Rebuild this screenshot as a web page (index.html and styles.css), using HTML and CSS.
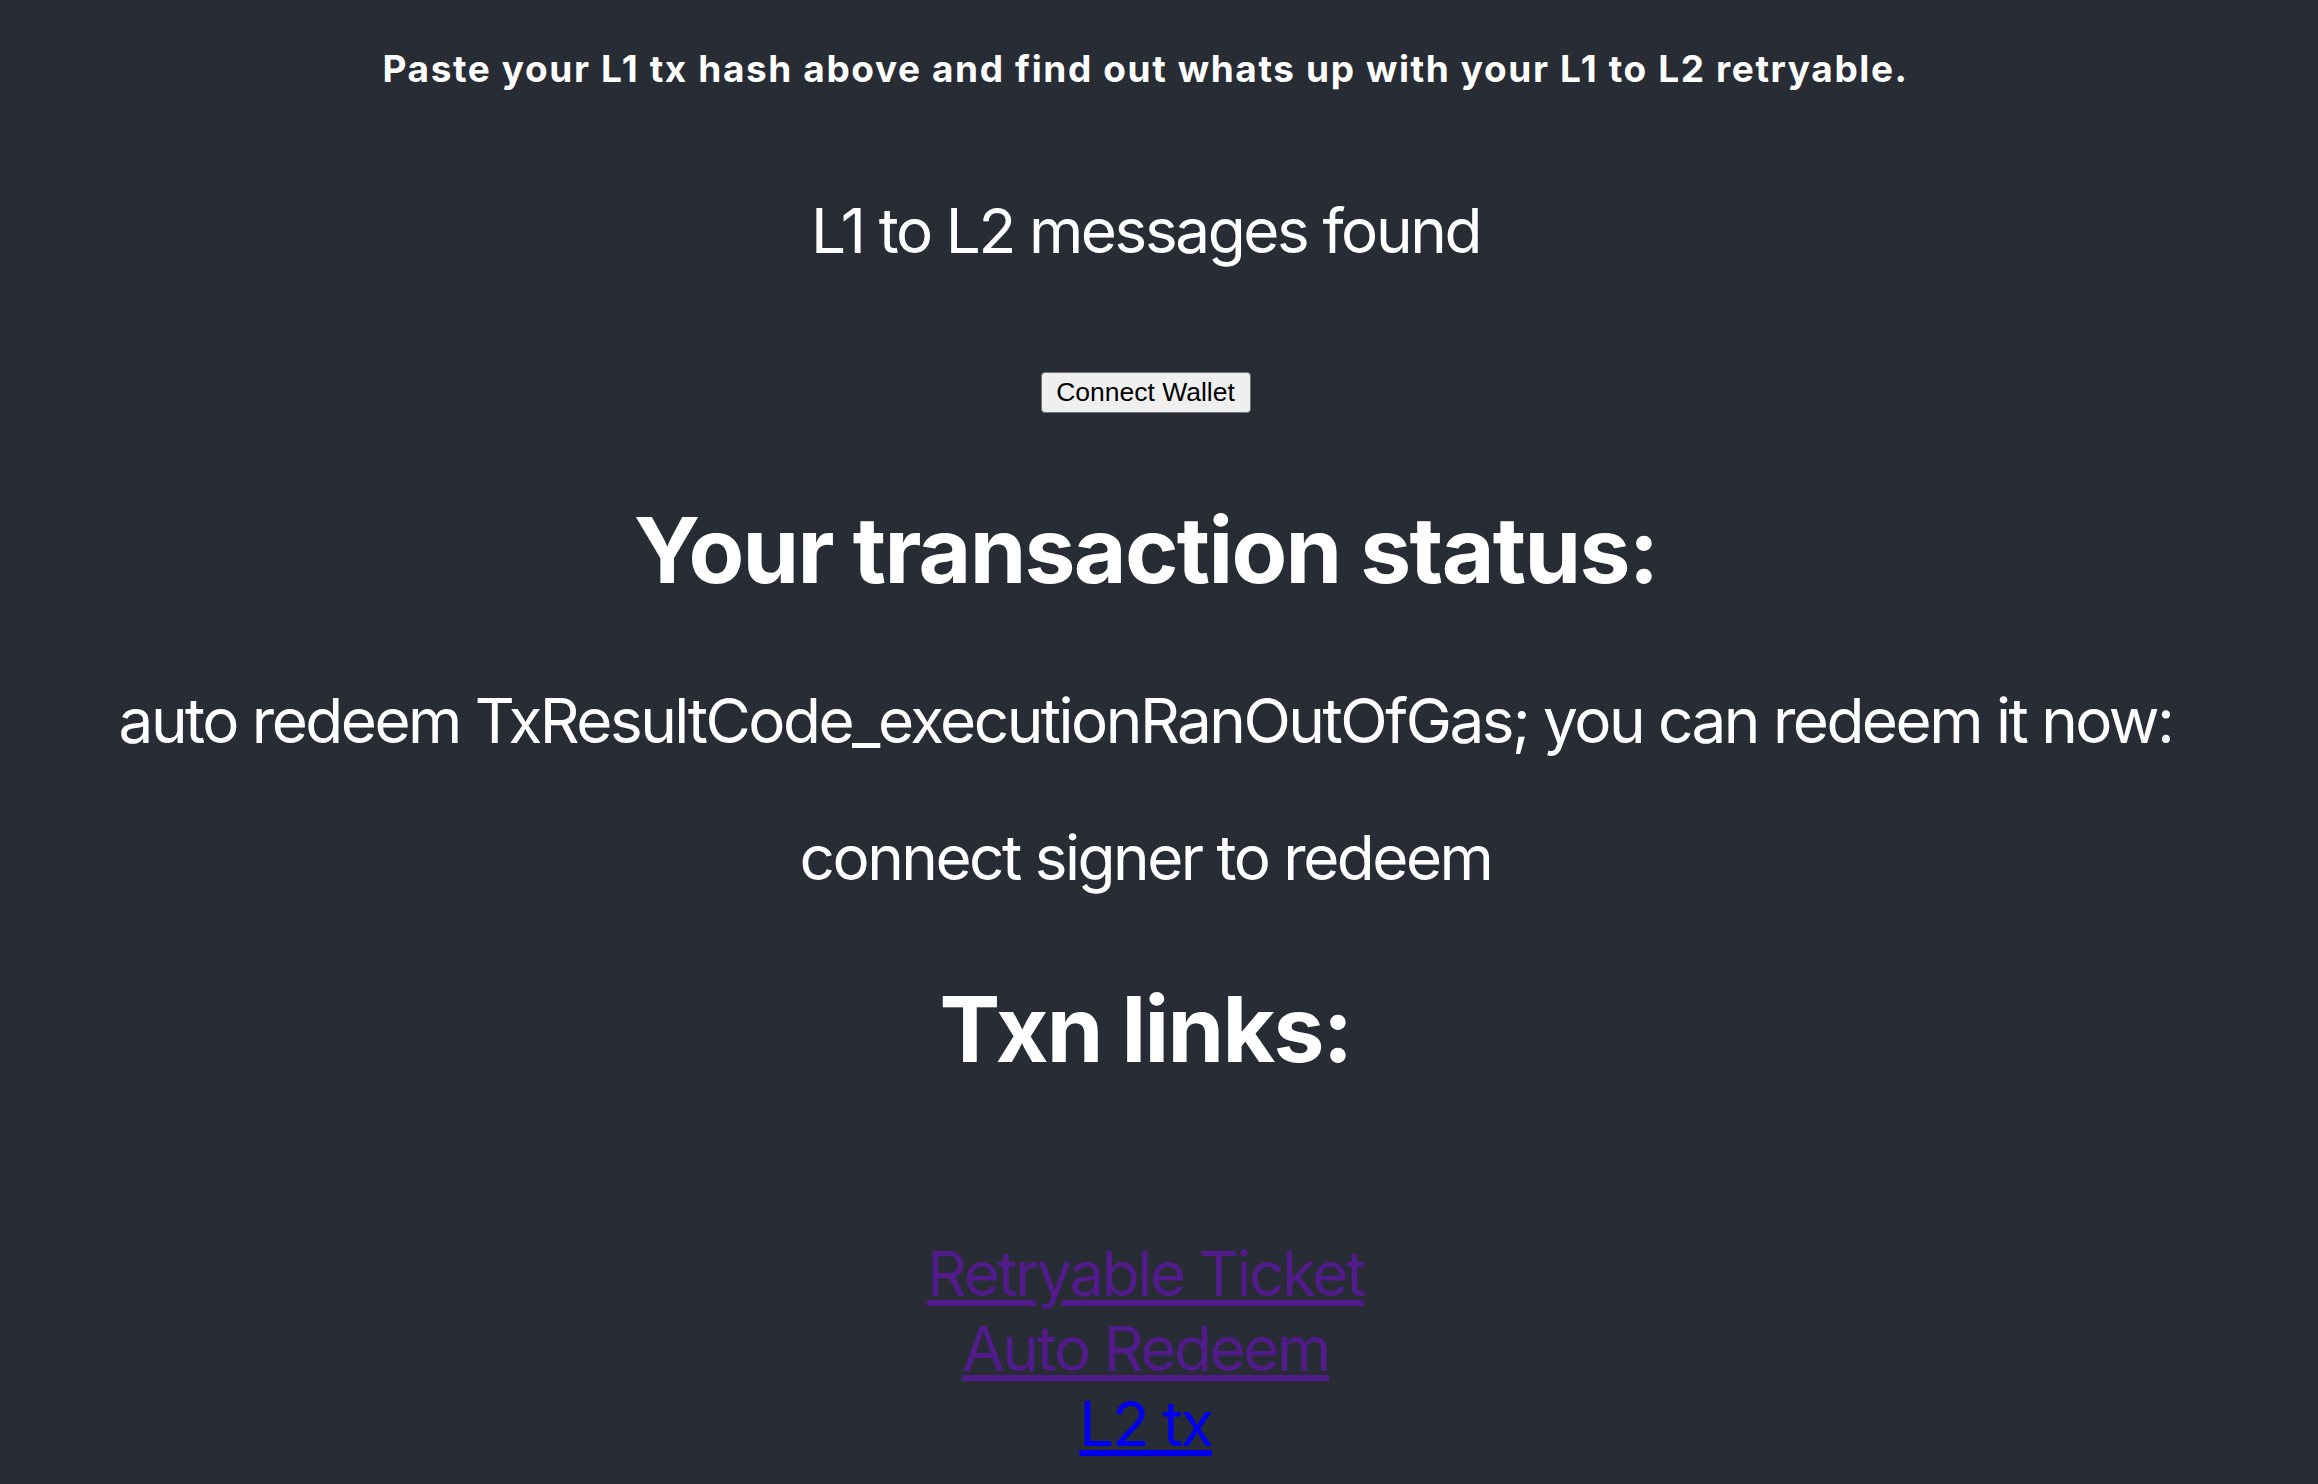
FILE: index.html
```html
<!DOCTYPE html>
<html lang="en">
<head>
<meta charset="utf-8">
<title>Retryable Dashboard</title>
<link rel="stylesheet" href="styles.css">
</head>
<body>
<main class="page">
  <p class="intro">Paste your L1 tx hash above and find out whats up with your L1 to L2 retryable.</p>
  <h2 class="found">L1 to L2 messages found</h2>
  <button class="wallet-btn" type="button">Connect Wallet</button>
  <h1 class="title status-title">Your transaction status:</h1>
  <p class="line result">auto redeem TxResultCode_executionRanOutOfGas; you can redeem it now:</p>
  <p class="line signer">connect signer to redeem</p>
  <h1 class="title links-title">Txn links:</h1>
  <div class="links">
    <div class="link-row"><a class="link visited" href="#ticket">Retryable Ticket</a></div>
    <div class="link-row"><a class="link visited" href="#redeem">Auto Redeem</a></div>
    <div class="link-row"><a class="link fresh" href="#l2tx">L2 tx</a></div>
  </div>
</main>
</body>
</html>
```

FILE: styles.css
```css
html, body {
  margin: 0;
  padding: 0;
  background: #282c34;
}

body {
  color: #ffffff;
  font-family: "Inter", "Noto Sans", sans-serif;
  min-height: 1484px;
}

.page {
  display: flex;
  flex-direction: column;
  align-items: center;
  text-align: center;
  padding-top: 47px;
  padding-right: 27px;
}

.intro {
  margin: 0;
  font-size: 37px;
  font-weight: 700;
  line-height: 1.21;
  letter-spacing: 1.6px;
}

.found {
  margin: 101px 0 0;
  font-size: 62px;
  font-weight: 400;
  line-height: 1.21;
  letter-spacing: -2.4px;
}

.wallet-btn {
  margin-top: 104px;
  font-family: "Liberation Sans", Arial, sans-serif;
  font-size: 26.5px;
  color: #000000;
  background: #efefef;
  border: 1px solid #767676;
  border-radius: 4px;
  padding: 0 10px;
  height: 41px;
  width: 210px;
  line-height: 39px;
}

.title {
  margin: 0;
  font-size: 91px;
  font-weight: 700;
  line-height: 1.21;
  letter-spacing: -1.7px;
}

.status-title {
  margin-top: 82px;
}

.line {
  margin: 0;
  font-size: 62px;
  font-weight: 400;
  line-height: 1.21;
  letter-spacing: -2.5px;
}

.result {
  margin-top: 78px;
}

.signer {
  margin-top: 62px;
}

.links-title {
  margin-top: 79px;
}

.links {
  margin-top: 152px;
  font-size: 62px;
  line-height: 1.21;
  letter-spacing: -2.4px;
}

.link {
  text-decoration: underline;
}

.link.visited {
  color: #521b8c;
}

.link.fresh {
  color: #0000ee;
}
```
